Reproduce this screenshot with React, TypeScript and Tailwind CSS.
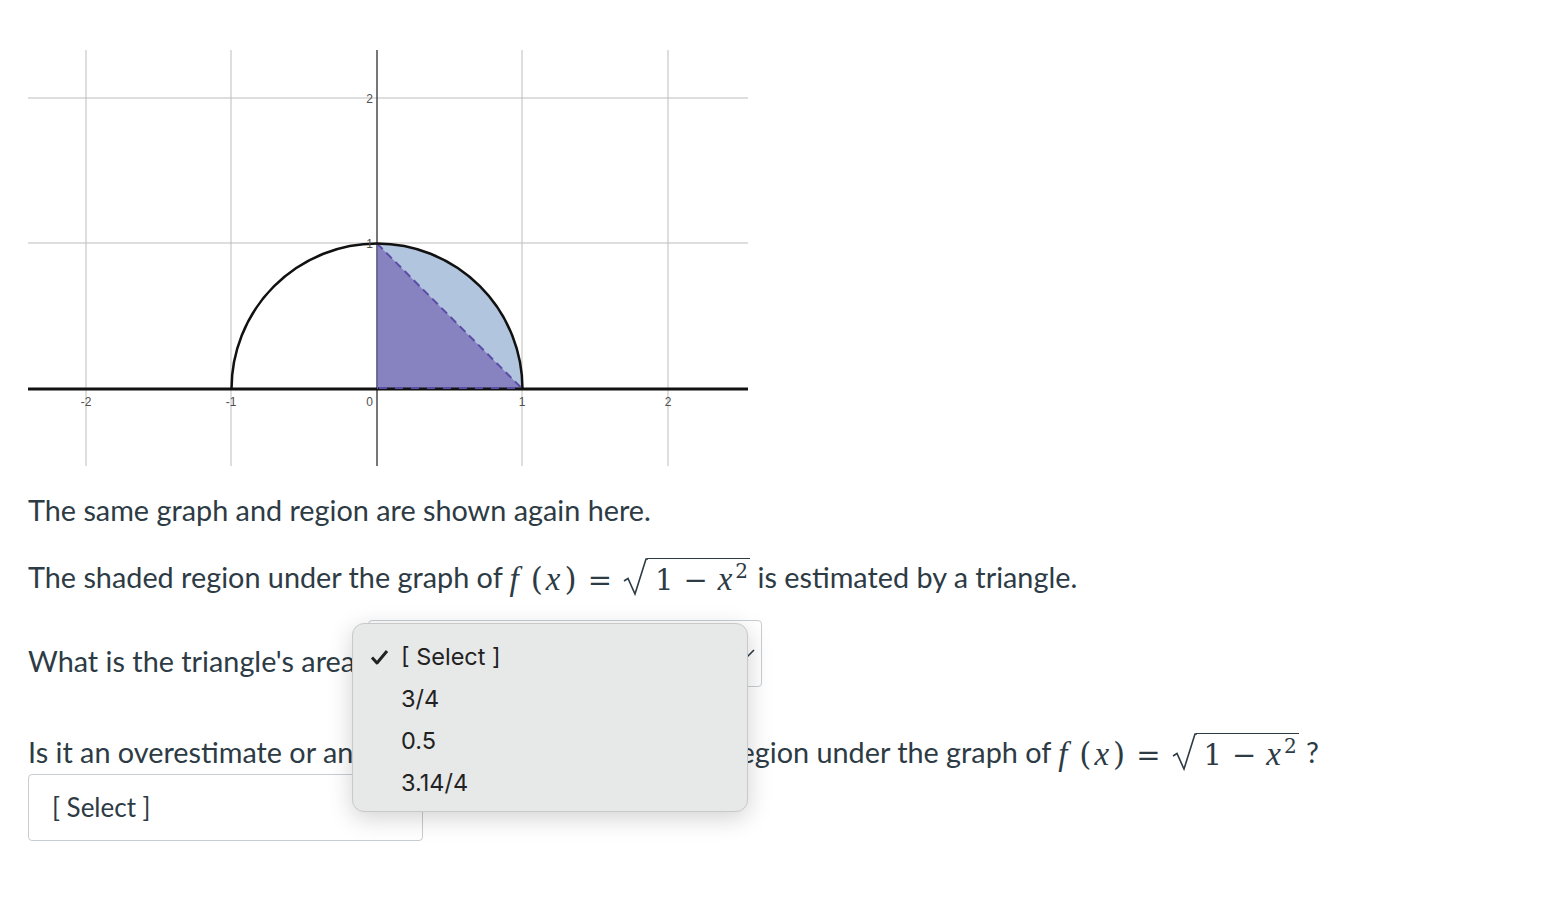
import React from "react";

const UNIT = 145.5;
const OX = 349;
const OY = 341;

function Graph() {
  const vx = [58, 203, 494, 640];
  const hy = [50, 195];
  const top = OY - UNIT;
  const right = OX + UNIT;
  return (
    <svg width={720} height={420} viewBox="0 0 720 420" className="block">
      {/* grid */}
      {vx.map((x) => (
        <line key={x} x1={x} y1={2} x2={x} y2={418} stroke="#bdbdbd" strokeWidth={1} />
      ))}
      {hy.map((y) => (
        <line key={y} x1={0} y1={y} x2={720} y2={y} stroke="#bdbdbd" strokeWidth={1} />
      ))}

      {/* shaded quarter circle + triangle */}
      <path d={`M${OX},${OY} L${OX},${top} A${UNIT},${UNIT} 0 0 1 ${right},${OY} Z`} fill="#b1c5de" />
      <path d={`M${OX},${OY} L${OX},${top} L${right},${OY} Z`} fill="#8782c0" />

      {/* y axis */}
      <line x1={OX} y1={2} x2={OX} y2={418} stroke="#4a4a4a" strokeWidth={1.5} />
      {/* x axis */}
      <line x1={0} y1={OY} x2={720} y2={OY} stroke="#111" strokeWidth={3} />

      {/* triangle edges */}
      <line x1={OX} y1={top} x2={right} y2={OY} stroke="#5b4ca6" strokeWidth={2} strokeDasharray="8 5" />
      <line x1={OX + 2} y1={OY - 1} x2={right} y2={OY - 1} stroke="#5b4ca6" strokeWidth={2} strokeDasharray="8 8" />
      <line x1={OX + 0.5} y1={top} x2={OX + 0.5} y2={OY} stroke="#6a5fb3" strokeWidth={1} />

      {/* semicircle */}
      <path
        d={`M${OX - UNIT},${OY} A${UNIT},${UNIT} 0 0 1 ${right},${OY}`}
        fill="none"
        stroke="#111"
        strokeWidth={2.5}
      />

      {/* labels */}
      <g fontFamily="'Liberation Sans', Arial, sans-serif" fontSize={12} fill="#505050">
        <text x={345} y={55} textAnchor="end">2</text>
        <text x={345} y={200} textAnchor="end">1</text>
        <text x={345} y={358} textAnchor="end">0</text>
        <text x={58} y={358} textAnchor="middle">-2</text>
        <text x={203} y={358} textAnchor="middle">-1</text>
        <text x={494} y={358} textAnchor="middle">1</text>
        <text x={640} y={358} textAnchor="middle">2</text>
      </g>
    </svg>
  );
}

const serif = { fontFamily: "'DejaVu Serif', 'Liberation Serif', serif" };
const italicSerif = { fontFamily: "'Liberation Serif', 'DejaVu Serif', serif" };

// f(x) = sqrt(1 - x^2), set in serif faces like KaTeX output
function Formula() {
  return (
    <span className="inline-flex items-baseline text-[29px] leading-none text-[#2d3b45]" style={serif}>
      <span className="italic text-[33px]" style={italicSerif}>f</span>
      <span className="ml-[12px] text-[31px]">(</span>
      <span className="italic text-[33px] ml-[3px]" style={italicSerif}>x</span>
      <span className="ml-[4px] text-[31px]">)</span>
      <span className="mx-[11px]">=</span>
      <span className="relative inline-flex items-baseline pl-[24px]">
        <svg width={25} height={38} viewBox="0 0 25 38" className="absolute left-0 top-0">
          <path d="M1 23 L5 20.5 L12 36 L23 1 L25 1" fill="none" stroke="#2d3b45" strokeWidth={1.6} />
        </svg>
        <span className="inline-flex items-baseline border-t-[1.6px] border-[#2d3b45] pt-[4px] pl-[8px] pr-[2px]">
          <span>1</span>
          <span className="mx-[10px]">−</span>
          <span className="italic text-[33px]" style={italicSerif}>x</span>
          <span className="relative top-[-12px] ml-[3px] text-[20px]">2</span>
        </span>
      </span>
    </span>
  );
}

export default function App() {
  return (
    <div
      className="relative min-h-screen bg-white text-[#2d3b45] pl-[28px] pt-[48px]"
      style={{ fontFamily: "Lato, 'Noto Sans', sans-serif" }}
    >
      <Graph />

      <p className="text-[28.8px] leading-[40px] mt-[22px]">The same graph and region are shown again here.</p>

      <p className="text-[28.8px] leading-[40px] mt-[27px] flex items-center">
        <span>The shaded region under the graph of&nbsp;</span>
        <Formula />
        <span>&nbsp;is estimated by a triangle.</span>
      </p>

      <div className="flex items-end mt-[23px] text-[28.8px] leading-[40px]">
        <span className="mb-[6px] w-[340px] whitespace-nowrap">What is the triangle's area?</span>
        <div className="w-[394px] h-[67px] rounded-[4px] border border-[#c7cdd1] bg-white flex items-center justify-end pr-[5px]">
          <svg width={10} height={10} viewBox="0 0 10 10">
            <path d="M1 8 L8 1" stroke="#2d3b45" strokeWidth={1.6} />
          </svg>
        </div>
      </div>

      <p className="text-[28.8px] leading-[40px] mt-[45px] flex items-center whitespace-nowrap">
        <span>Is it an overestimate or an underestimate of the shaded region under the graph of&nbsp;</span>
        <Formula />
        <span>&nbsp;?</span>
      </p>

      <div className="mt-[2px] w-[395px] h-[67px] rounded-[4px] border border-[#c7cdd1] bg-white flex items-center pl-[23px] text-[26px]">
        [ Select ]
      </div>

      {/* open native select popup */}
      <div
        className="absolute left-[352px] top-[623px] w-[396px] h-[189px] rounded-[12px] border border-[#c9c9c9] bg-[#e7e8e8] shadow-[0_6px_24px_rgba(0,0,0,0.18)] pt-[12px] text-[23.5px] text-[#222]"
        style={{ fontFamily: "Inter, Roboto, sans-serif" }}
      >
        {["[ Select ]", "3/4", "0.5", "3.14/4"].map((opt, i) => (
          <div key={opt} className="h-[42px] flex items-center">
            <span className="w-[48px] flex justify-center pl-[4px]">
              {i === 0 && (
                <svg width={19} height={16} viewBox="0 0 19 16">
                  <path d="M2 8.5 L7 14 L17 2" fill="none" stroke="#222" strokeWidth={3} strokeLinejoin="round" />
                </svg>
              )}
            </span>
            <span>{opt}</span>
          </div>
        ))}
      </div>
    </div>
  );
}
